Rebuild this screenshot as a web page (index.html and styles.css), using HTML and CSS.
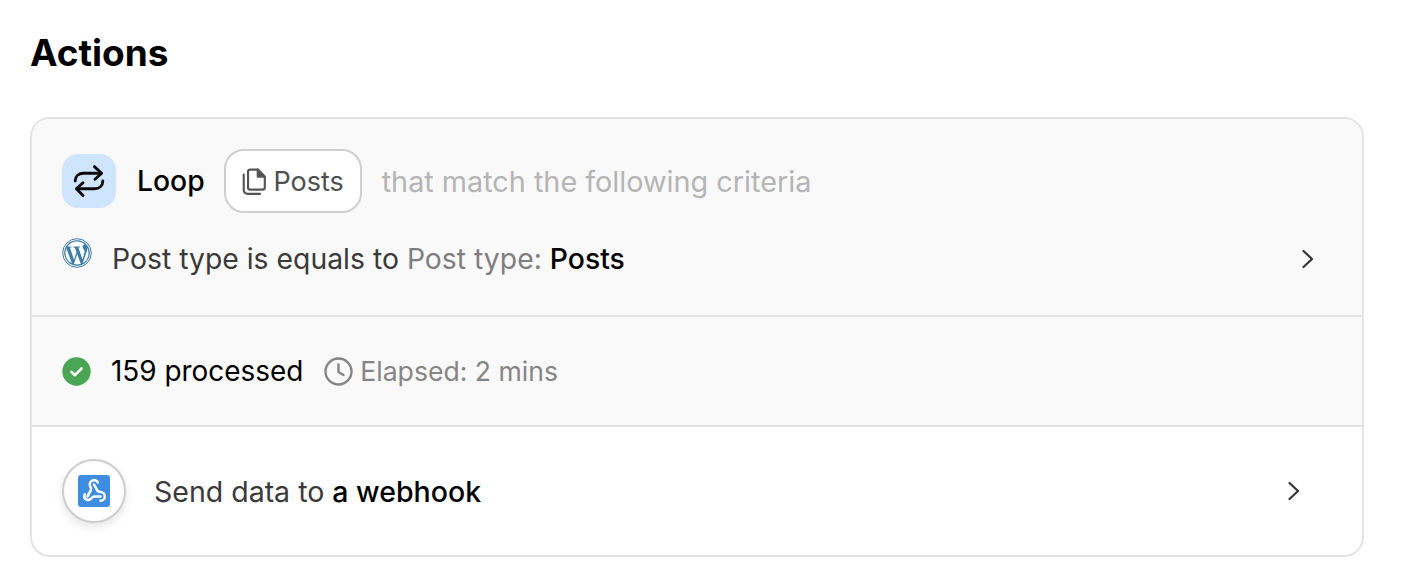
FILE: index.html
```html
<!DOCTYPE html>
<html lang="en">
<head>
<meta charset="utf-8">
<title>Actions</title>
<link rel="stylesheet" href="styles.css">
</head>
<body>
<main class="page">
  <h1 class="title">Actions</h1>
  <section class="card">
    <div class="sec sec-loop">
      <div class="loop-row">
        <span class="loop-icon">
          <svg width="36" height="36" viewBox="0 0 30 30" fill="none" stroke="#0b0b0b" stroke-width="2.400" stroke-linecap="round" stroke-linejoin="round"><path d="M19.500 3 25.500 8.500l-5.500 5"/><path d="M25 8.500H10.500C6.500 8.500 3.500 11 3.500 15"/><path d="M10 27 4.500 21.500 10 16.500"/><path d="M5 21.500h14.500c4 0 7-2.500 7-6.500"/></svg>
        </span>
        <span class="loop-label">Loop</span>
        <span class="chip">
          <svg width="24" height="27" viewBox="0.500 1 22 25" fill="none" stroke="#555" stroke-width="2" stroke-linejoin="round" stroke-linecap="round"><path d="M8 2.500h7l6.500 6.500v10a2 2 0 0 1-2 2H8a2 2 0 0 1-2-2v-14.500a2 2 0 0 1 2-2Z"/><path d="M15 2.500 21.500 9H15Z" fill="#555"/><path d="M2 7v14.500a3.500 3.500 0 0 0 3.500 3.500H17"/></svg>
          Posts
        </span>
        <span class="muted">that match the following criteria</span>
      </div>
      <div class="crit-row">
        <svg class="wp" width="30" height="30" viewBox="0 0 30 30"><circle cx="15" cy="15" r="14.300" fill="none" stroke="#3e7ca6" stroke-width="1"/><circle cx="15" cy="15" r="12.800" fill="#3e7ca6"/><path fill="#fff" d="M3.500 15c0 4.500 2.600 8.400 6.400 10.300L4.400 10.300A11.500 11.500 0 0 0 3.500 15Zm19.200-.6c0-1.400-.5-2.400-1-3.100-.6-1-1.100-1.800-1.100-2.800 0-1.100.8-2.100 2-2.100h.2A11.500 11.500 0 0 0 5.400 8.600h.7c1.200 0 3-.1 3-.1.600 0 .7.900.1.900l-1.300.1 4.100 12.200 2.500-7.400-1.800-4.800-1.200-.1c-.6 0-.5-1 .1-.9 0 0 1.900.1 3 .1 1.200 0 3-.1 3-.1.600 0 .7.900.1.900l-1.300.1 4.100 12.100 1.100-3.800c.5-1.500.9-2.600.9-3.500Z"/><path fill="#fff" d="m15.200 16-3.400 10a11.500 11.500 0 0 0 7.100-.2l-.1-.1Zm9.900-6.500.1 1.200c0 1.200-.2 2.500-.9 4.200l-3.500 10.100A11.500 11.500 0 0 0 25.100 9.500Z"/></svg>
        <span class="crit-text">Post type is equals to <span class="grey">Post type:</span> <b class="val">Posts</b></span>
        <svg class="chev" width="14" height="20" viewBox="0 0 14 20" fill="none" stroke="#333" stroke-width="2.200" stroke-linecap="round" stroke-linejoin="round"><path d="m2.500 2 8.500 8-8.500 8"/></svg>
      </div>
    </div>
    <div class="sec sec-status">
      <svg width="29" height="29" viewBox="0 0 29 29"><circle cx="14.500" cy="14.500" r="14.200" fill="#4aa654"/><path d="m9.500 15 3.500 3.200 6.500-6.700" fill="none" stroke="#fff" stroke-width="2.600" stroke-linecap="round" stroke-linejoin="round"/></svg>
      <span class="processed">159 processed</span>
      <span class="elapsed">
        <svg width="29" height="29" viewBox="0 0 29 29" fill="none" stroke="#858585" stroke-width="2.400" stroke-linecap="round" stroke-linejoin="round"><circle cx="14.500" cy="14.500" r="13"/><path d="M14.500 7.500v7.500l5 3"/></svg>
        Elapsed: 2 mins
      </span>
    </div>
    <div class="sec sec-hook">
      <span class="hook-circle">
        <span class="hook-tile">
          <svg width="26" height="26" viewBox="0 0 24 24" fill="none" stroke="#fff" stroke-width="2.300" stroke-linecap="round" stroke-linejoin="round"><path d="M18 16.980h-5.990c-1.100 0-1.980.88-2.690 1.860A3.500 3.500 0 0 1 3 17c.01-.7.200-1.400.57-2"/><path d="m6 17 3.130-5.780c.53-.97.100-2.180-.500-3.100a4 4 0 1 1 6.890-4.060"/><path d="m12 6 3.130 5.730C15.660 12.700 16.900 13 18 13a4 4 0 0 1 0 8"/></svg>
        </span>
      </span>
      <span class="hook-text">Send data to <b class="val">a webhook</b></span>
      <svg class="chev" width="14" height="20" viewBox="0 0 14 20" fill="none" stroke="#333" stroke-width="2.200" stroke-linecap="round" stroke-linejoin="round"><path d="m2.500 2 8.500 8-8.500 8"/></svg>
    </div>
  </section>
</main>
</body>
</html>
```
FILE: styles.css
```css
* { box-sizing: border-box; }
html, body { margin: 0; background: #fff; }
body { font-family: "Inter", "Liberation Sans", sans-serif; width: 1410px; height: 576px; overflow: hidden; }
.page { padding: 30px 46px 0 30px; }
.title { margin: 0 0 42px; font-size: 37px; line-height: 45px; font-weight: 700; color: #000; }
.card { border: 2px solid #e4e4e4; border-radius: 20px; overflow: hidden; background: #fff; }
.sec { display: flex; align-items: center; }
.sec-loop { flex-direction: column; align-items: stretch; background: #f9f9f9; height: 198px; border-bottom: 2px solid #e4e4e4; padding: 30px 30px 0; }
.loop-row { display: flex; align-items: center; height: 64px; }
.loop-icon { width: 54px; height: 54px; border-radius: 16px; background: #cfe4fd; display: flex; align-items: center; justify-content: center; }
.loop-label { margin-left: 21px; font-size: 28.300px; font-weight: 500; color: #000; }
.chip { margin-left: 19px; height: 64px; width: 138px; border: 2px solid #cfcfcf; border-radius: 20px; background: #fff; display: flex; align-items: center; justify-content: center; gap: 8px; font-size: 27px; color: #4f4f4f; }
.muted { margin-left: 20px; font-size: 28.800px; color: #b5b5b5; }
.crit-row { display: flex; align-items: center; height: 46px; margin-top: 23px; }
.wp { align-self: flex-start; margin-top: 2px; }
.crit-text { margin-left: 20px; font-size: 28.350px; color: #3a3a3a; flex: 1; }
.grey { color: #7f7f7f; }
.val { font-weight: 500; color: #000; }
.chev { flex: none; margin-right: 17px; }
.sec-status { background: #f9f9f9; height: 110px; border-bottom: 2px solid #e4e4e4; padding: 0 30px; }
.processed { margin-left: 20px; font-size: 27.900px; color: #000; }
.elapsed { margin-left: 21px; display: flex; align-items: center; gap: 7px; font-size: 26.600px; color: #858585; }
.sec-hook { height: 128px; padding: 0 30px; }
.hook-circle { width: 64px; height: 64px; border-radius: 50%; background: #fff; border: 2px solid #cdcdcd; box-shadow: 0 4px 10px rgba(0,0,0,.1); display: flex; align-items: center; justify-content: center; flex: none; }
.hook-tile { width: 32px; height: 32px; border-radius: 3px; background: #3f8de3; display: flex; align-items: center; justify-content: center; }
.hook-text { margin-left: 28px; font-size: 28.500px; color: #3a3a3a; flex: 1; }
.sec-hook .chev { margin-right: 31px; }
```
